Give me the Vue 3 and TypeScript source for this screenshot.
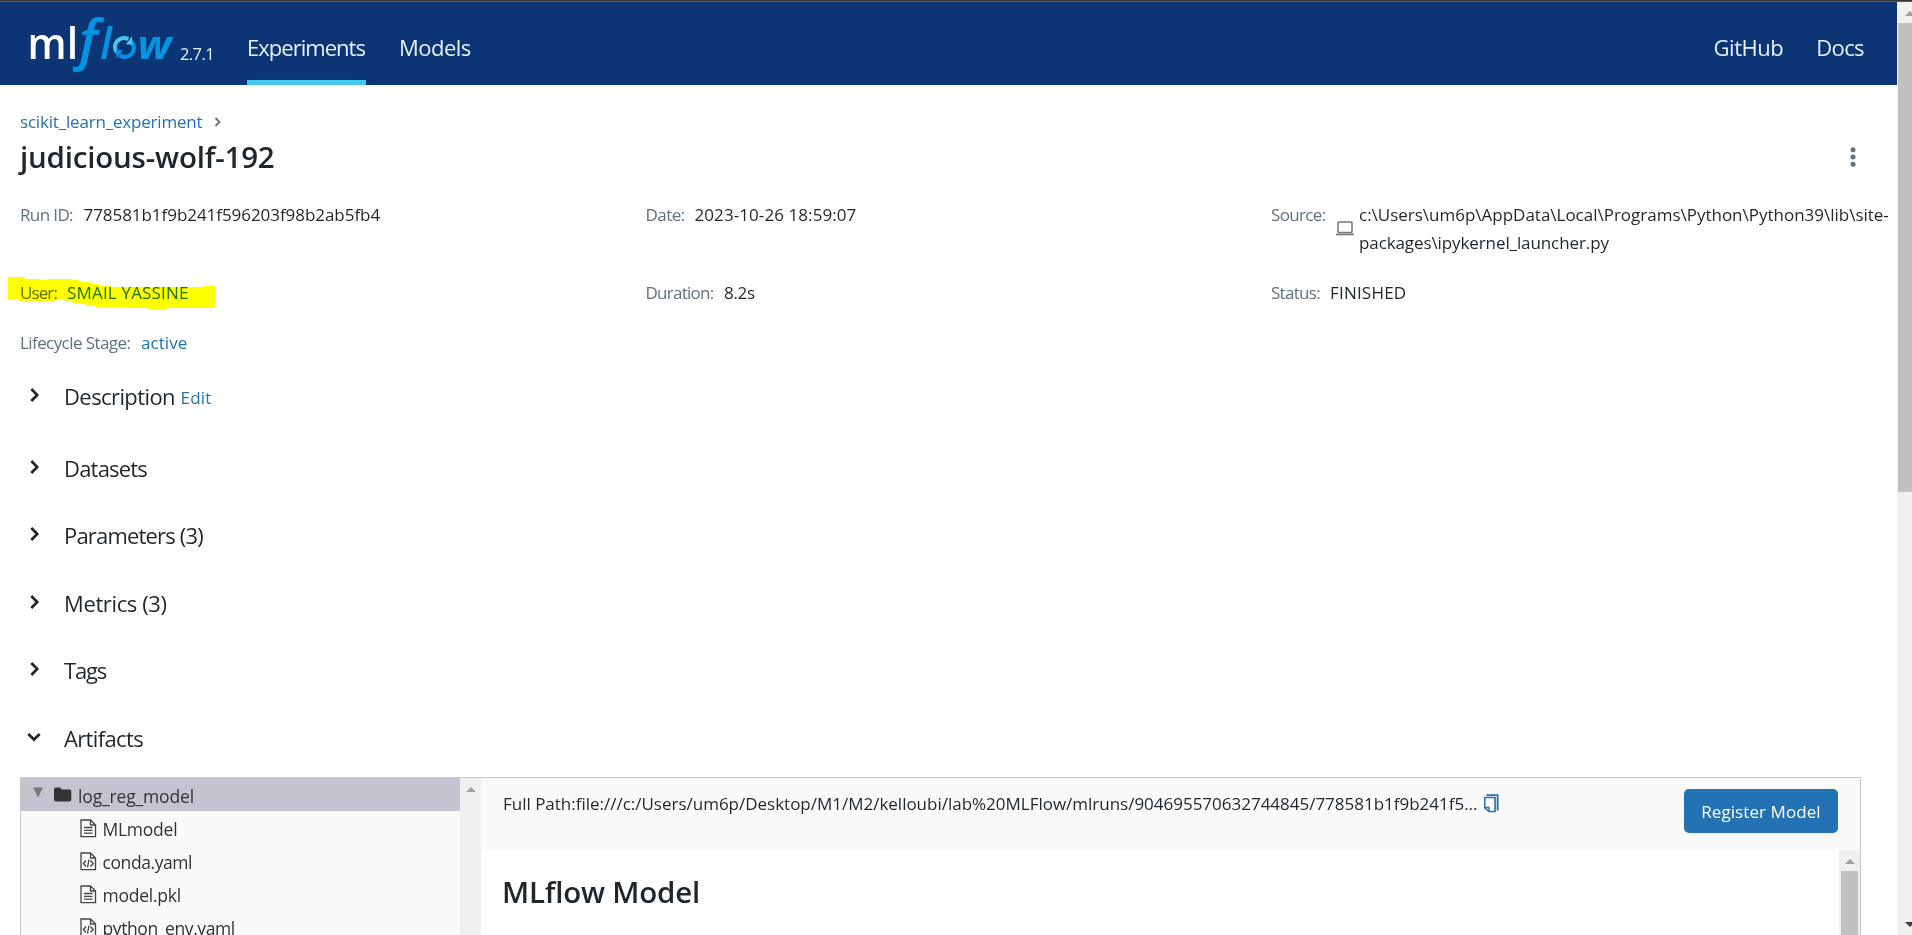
<script setup lang="ts">
interface Meta { label: string; value: string; area: string; labelWidth: number; track: string; labelTrack: string; link?: boolean }
interface Section { title: string; track: string; open?: boolean; edit?: boolean }
interface TreeFile { name: string; kind: 'text' | 'code'; track: string }

const metas: Meta[] = [
  { label: 'Run ID:', value: '778581b1f9b241f596203f98b2ab5fb4', area: 'run', labelWidth: 63.5, labelTrack: '-0.62px', track: '-0.05px' },
  { label: 'Date:', value: '2023-10-26 18:59:07', area: 'date', labelWidth: 49, labelTrack: '-0.57px', track: '0.08px' },
  { label: 'User:', value: 'SMAIL YASSINE', area: 'user', labelWidth: 47, labelTrack: '-0.9px', track: '0.18px', link: true },
  { label: 'Duration:', value: '8.2s', area: 'dur', labelWidth: 78.5, labelTrack: '-0.74px', track: '-0.3px' },
  { label: 'Status:', value: 'FINISHED', area: 'status', labelWidth: 59, labelTrack: '-0.7px', track: '0.2px' },
  { label: 'Lifecycle Stage:', value: 'active', area: 'life', labelWidth: 121, labelTrack: '-0.58px', track: '0.05px', link: true },
]
const sections: Section[] = [
  { title: 'Description', track: '-0.59px', edit: true },
  { title: 'Datasets', track: '-0.8px' },
  { title: 'Parameters (3)', track: '-0.82px' },
  { title: 'Metrics (3)', track: '-0.38px' },
  { title: 'Tags', track: '-1.19px' },
  { title: 'Artifacts', track: '-0.64px', open: true },
]
const files: TreeFile[] = [
  { name: 'MLmodel', kind: 'text', track: '-0.25px' },
  { name: 'conda.yaml', kind: 'code', track: '-0.42px' },
  { name: 'model.pkl', kind: 'text', track: '-0.24px' },
  { name: 'python_env.yaml', kind: 'code', track: '-0.4px' },
]
const fullPath = 'Full Path:file:///c:/Users/um6p/Desktop/M1/M2/kelloubi/lab%20MLFlow/mlruns/904695570632744845/778581b1f9b241f5...'
</script>

<template>
  <div class="window">
    <div class="strip"></div>
    <div class="viewport">
      <div class="page">
        <header class="nav">
          <svg class="logo" width="150" height="64" viewBox="0 0 150 64">
            <text class="ml" x="0.6" y="50" textLength="50.500" lengthAdjust="spacingAndGlyphs">ml</text>
            <text class="f" x="52" y="49.500">f</text>
            <text class="fl" x="73" y="50">l</text>
            <g transform="translate(-1.700 -1)">
              <g fill="none" stroke-width="4.2">
                <path d="M91.5 44.5A9 9 0 0 1 103 31.2" stroke="#43c9ed" />
                <path d="M106.800 34.500A9 9 0 0 1 94.500 47.300" stroke="#0194e2" />
              </g>
              <path d="M100.500 36.500L106.700 28.200L107.500 36.500Z" fill="#43c9ed" />
              <path d="M97.500 42L91.500 50.500L90.500 42Z" fill="#0194e2" />
            </g>
            <text class="w" x="110.500" y="50" textLength="34" lengthAdjust="spacingAndGlyphs">w</text>
          </svg>
          <span class="version">2.7.1</span>
          <a class="tab exp active">Experiments</a>
          <a class="tab models">Models</a>
          <a class="tab github">GitHub</a>
          <a class="tab docs">Docs</a>
        </header>

        <div class="crumb">
          <a>scikit_learn_experiment</a>
          <svg width="8" height="12" viewBox="0 0 8 12"><path d="M1.500 2L5.500 6L1.500 10" fill="none" stroke="#5f7281" stroke-width="1.800" /></svg>
        </div>
        <div class="heading">
          <h1>judicious-wolf-192</h1>
          <svg width="6" height="22" viewBox="0 0 6 22" fill="#5f7281"><circle cx="3" cy="3.800" r="2.500" /><circle cx="3" cy="11" r="2.500" /><circle cx="3" cy="18.200" r="2.500" /></svg>
        </div>

        <div class="metas">
          <div v-for="m in metas" :key="m.area" class="meta" :class="m.area">
            <span class="label" :style="{ width: m.labelWidth + 'px', letterSpacing: m.labelTrack }">{{ m.label }}</span>
            <span class="value" :class="{ link: m.link }" :style="{ letterSpacing: m.track }">{{ m.value }}</span>
            <svg v-if="m.area === 'user'" class="marker" width="208" height="34" viewBox="0 0 208 34">
              <path fill="#ffff00" d="M0 0H17V2H31V3H39V2H63V3H71V5H83V7H92V9H103V10H195V9H207V31H203V31H159V32H140V31H119V30H88V29H78V27H74V26H65V24H57V23H47V24H12V22H0Z" />
            </svg>
          </div>
          <div class="meta source">
            <span class="label">Source:</span>
            <svg width="18" height="15" viewBox="0 0 18 15"><rect x="2" y="1" width="14" height="10.500" rx="1" fill="none" stroke="#777" stroke-width="1.500" /><path d="M0 12.500H18V14.300H0Z" fill="#777" /></svg>
            <span class="value">c:\Users\um6p\AppData\Local\Programs\Python\Python39\lib\site-<br /><span class="second">packages\ipykernel_launcher.py</span></span>
          </div>
        </div>

        <section v-for="s in sections" :key="s.title" class="section" :class="{ spaced: s.edit }">
          <svg class="chevron" width="14" height="16" viewBox="0 0 14 16">
            <path v-if="s.open" d="M1.300 5L7 10.500L12.700 5" />
            <path v-else d="M4.300 2L10.200 8L4.300 14" />
          </svg>
          <span class="title" :style="{ letterSpacing: s.track }">{{ s.title }}</span>
          <a v-if="s.edit" class="edit">Edit</a>
        </section>

        <div class="artifacts">
          <div class="tree">
            <div class="folder">
              <svg width="12" height="11" viewBox="0 0 12 11"><path d="M1 0.500H11L6 10.500Z" fill="#777" /></svg>
              <svg class="dir" width="18" height="15" viewBox="0 0 18 15"><path fill="#333" d="M0 2.300Q0 0.500 1.800 0.500H5.500Q7.300 0.500 7.300 2.400H15.300Q17.300 2.400 17.300 4.300V12.500Q17.300 14.500 15.300 14.500H2Q0 14.500 0 12.500Z" /></svg>
              <span>log_reg_model</span>
            </div>
            <div v-for="f in files" :key="f.name" class="file">
              <svg width="17" height="19" viewBox="0 0 17 19" fill="none" stroke="#444" stroke-width="1.300">
                <path d="M1 1H10.500L15.500 6V17.700H1Z" />
                <path d="M10.500 1V6H15.500" />
                <path v-if="f.kind === 'text'" d="M4 8.500H12.500M4 11.300H12.500M4 14.100H12.500" />
                <path v-else d="M6 8.500L3.300 11.500L6 14.500M10.500 8.500L13.200 11.500L10.500 14.500M9 7.500L7.500 15.500" />
              </svg>
              <span :style="{ letterSpacing: f.track }">{{ f.name }}</span>
            </div>
          </div>
          <div class="bar"><i class="up"></i></div>
          <div class="detail">
            <div class="pathbar">
              <span class="path">{{ fullPath }}</span>
              <svg width="15" height="19" viewBox="0 0 15 19" fill="none" stroke="#2272b4">
                <path d="M2.500 1.200H13.700V16.500" stroke-width="1.700" />
                <path d="M11.700 3V17" stroke="#8fb9dc" stroke-width="1.500" />
                <path d="M0.800 3.500H11V17.500H5L0.800 13.800Z" stroke-width="1.500" />
                <path d="M0.800 13.500H5V17.500" stroke-width="1.300" />
              </svg>
              <button>Register Model</button>
            </div>
            <div class="body">
              <h2>MLflow Model</h2>
              <div class="bar inner"><i class="up"></i><div class="thumb"></div></div>
            </div>
          </div>
        </div>
      </div>
      <div class="bar outer"><i class="up"></i><div class="thumb"></div><i class="down"></i></div>
    </div>
  </div>
</template>

<style>
body { margin: 0; overflow: hidden; }
</style>

<style scoped>
.window { width: 1912px; height: 935px; overflow: hidden; background: #fff; color: #1f272d; font: 17px/28px "Open Sans", "Noto Sans", sans-serif; white-space: nowrap; font-variant-ligatures: none; }
.strip { height: 1px; background: #333; border-bottom: 1px solid #5b5b5b; }
.viewport { display: flex; height: 933px; }
.page { width: 1897px; height: 933px; overflow: hidden; }
svg { flex: none; display: block; }

.nav { display: flex; height: 83px; box-sizing: border-box; background: #0b3574; color: #e7f1fb; }
.logo { margin: 7px 0 0 27px; overflow: visible; }
.ml { font: 600 43px "Open Sans"; fill: #fff; }
.f { font: italic 600 55px "Open Sans"; fill: #0194e2; }
.fl { font: italic 600 43px "Open Sans"; fill: #0194e2; }
.w { font: italic 700 40px "Open Sans"; fill: #0194e2; }
.version { width: 67px; padding: 38px 0 0 3px; font-size: 16.5px; letter-spacing: -0.6px; }
.tab { box-sizing: border-box; height: 83px; padding-top: 8px; font-size: 22px; line-height: 75px; }
.exp { width: 119px; letter-spacing: -0.97px; }
.active { border-bottom: 5px solid #43c9ed; }
.models { margin-left: 33px; letter-spacing: -0.52px; }
.github { margin-left: auto; letter-spacing: -0.5px; }
.docs { margin: 0 33px 0 33px; letter-spacing: -0.6px; }

.crumb { display: flex; align-items: center; gap: 12px; height: 28px; margin-top: 23px; padding-left: 20px; color: #2272b4; letter-spacing: -0.19px; }
.heading { display: flex; align-items: center; justify-content: space-between; height: 42px; padding: 0 41px 0 20px; }
h1 { margin: 0; font-size: 29.5px; font-weight: 600; letter-spacing: -0.2px; line-height: 42px; }

.metas { display: grid; grid-template-columns: 625.5px 625.5px 1fr; grid-template-rows: 78px 50px 33px; grid-template-areas: "run date source" "user dur status" "life . ."; margin-top: 23px; padding-left: 20px; }
.meta { display: flex; position: relative; }
.label { color: #5f7281; }
.run { grid-area: run; }
.date { grid-area: date; }
.user { grid-area: user; }
.dur { grid-area: dur; }
.status { grid-area: status; }
.life { grid-area: life; }
.source { grid-area: source; }
.source .label { width: 65px; letter-spacing: -0.65px; }
.source svg { margin: 20px 5px 0 0; }
.source .value { letter-spacing: -0.01px; }
.source .second { letter-spacing: -0.1px; }
.link { color: #2272b4; }
.marker { position: absolute; left: -12px; top: -2px; mix-blend-mode: multiply; }

.section { display: flex; align-items: center; height: 67.5px; padding-left: 27px; }
.spaced { margin-bottom: 4.25px; }
.chevron { margin-bottom: 2px; fill: none; stroke: #1f272d; stroke-width: 2.700; }
.title { margin-left: 23px; font-size: 22px; }
.edit { margin: 4px 0 0 5.500px; color: #2272b4; letter-spacing: 0.2px; }

.artifacts { display: flex; box-sizing: border-box; width: 1841px; height: 400px; margin: 5.250px 0 0 20px; border: 1px solid #c8c8c8; background: #fafafa; }
.tree { width: 439px; color: #333; font-size: 17.5px; }
.folder, .file { display: flex; align-items: center; height: 33px; }
.folder { padding-left: 11px; background: #c6c2d0; letter-spacing: -0.15px; }
.folder svg:first-child { margin-bottom: 3px; }
.dir { margin: 0 6px 0 10px; }
.folder span, .file span { padding-top: 3px; }
.file { padding-left: 59px; gap: 5.500px; }
.file svg { margin-top: 2px; }
.bar { position: relative; display: flex; flex-direction: column; align-items: center; width: 21px; background: #f0f0f0; }
.up, .down { width: 0; height: 0; border-left: 5px solid transparent; border-right: 5px solid transparent; }
.up { margin-top: 9px; border-bottom: 5px solid #a0a0a0; }
.thumb { width: 17px; background: #c1c1c1; }
.detail { flex: 1; }
.pathbar { display: flex; height: 72px; padding-left: 22px; }
.path { width: 974px; padding-top: 12px; letter-spacing: -0.01px; }
.pathbar svg { margin: 16px 0 0 7px; }
button { width: 154px; height: 44px; margin: 11px 22px 0 auto; padding: 2px 0 0; border: 0; border-radius: 5px; background: #2272b4; color: #fff; font: inherit; letter-spacing: 0.08px; }
.body { display: flex; justify-content: space-between; height: 330px; background: #fff; }
h2 { margin: 21px 0 0 21px; font-size: 29.5px; font-weight: 600; letter-spacing: -0.22px; line-height: 42px; }
.inner .thumb { height: 300px; margin-top: 7px; }
.outer { width: 15px; height: 933px; overflow: hidden; }
.outer .up { margin: 9px 0 0 11px; }
.outer .thumb { height: 469px; margin: 7px 0 0 4px; }
.outer .down { margin: auto 0 8px 11px; border-top: 5px solid #404040; }
</style>
